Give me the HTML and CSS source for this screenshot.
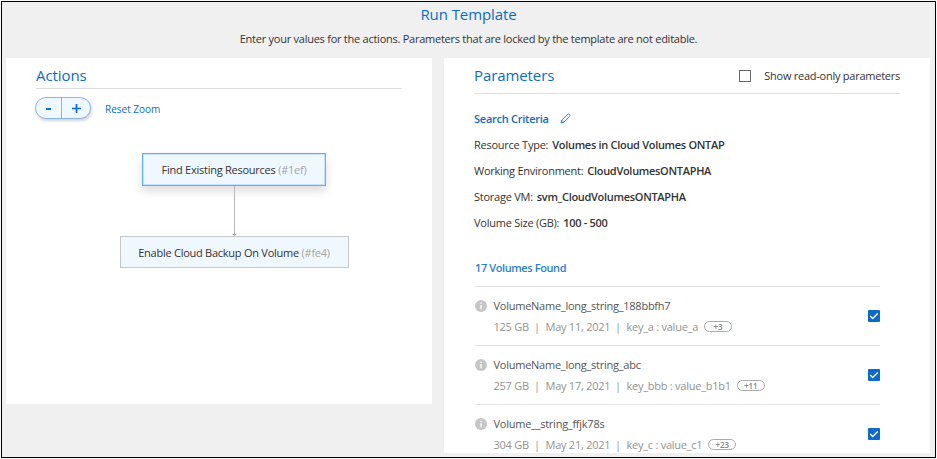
FILE: index.html
```html
<!DOCTYPE html>
<html lang="en">
<head>
<meta charset="utf-8">
<title>Run Template</title>
<link rel="stylesheet" href="styles.css">
</head>
<body>
<main class="frame">
  <header class="page-head">
    <h1>Run Template</h1>
    <p>Enter your values for the actions. Parameters that are locked by the template are not editable.</p>
  </header>
  <div class="panels">
    <section class="panel actions">
      <h2 class="panel-head">Actions</h2>
      <div class="zoom-bar">
        <div class="zoom">
          <button type="button" aria-label="Zoom out"><svg width="25" height="20" viewBox="0 0 25 20"><path d="M10 11h5" stroke="#0b6bcb" stroke-width="2"/></svg></button>
          <button type="button" aria-label="Zoom in"><svg width="28" height="20" viewBox="0 0 28 20"><path d="M10 10.500h9M14.500 6v9" stroke="#0b6bcb" stroke-width="1.700"/></svg></button>
        </div>
        <a class="reset">Reset Zoom</a>
      </div>
      <div class="flow">
        <div class="node selected"><span>Find Existing Resources <i>(#1ef)</i></span></div>
        <svg class="link" width="7" height="50" viewBox="0 0 7 50"><path d="M3.500 0v49" stroke="#b8b8bc"/><path d="M1 48h5l-2.500 2z" fill="#a6a6aa"/></svg>
        <div class="node"><span>Enable Cloud Backup On Volume <i>(#fe4)</i></span></div>
      </div>
    </section>
    <section class="panel params">
      <div class="panel-head">
        <h2>Parameters</h2>
        <label class="readonly"><span class="box"></span><span>Show read-only parameters</span></label>
      </div>
      <h3 class="criteria"><span>Search Criteria</span>
        <svg width="11" height="11" viewBox="0 0 11 11" fill="none" stroke="#1a75cf" stroke-width=".9" stroke-linejoin="round"><path d="M1 10l.7-2.800L7.600 1.300a1.200 1.200 0 0 1 1.700 0l.4.400a1.200 1.200 0 0 1 0 1.700L3.800 9.300zM1.700 7.200l2.100 2.100"/></svg>
      </h3>
      <dl class="fields">
        <div><dt>Resource Type:</dt><dd>Volumes in Cloud Volumes ONTAP</dd></div>
        <div><dt>Working Environment:</dt><dd>CloudVolumesONTAPHA</dd></div>
        <div><dt>Storage VM:</dt><dd>svm_CloudVolumesONTAPHA</dd></div>
        <div><dt>Volume Size (GB):</dt><dd>100 - 500</dd></div>
      </dl>
      <h3 class="found">17 Volumes Found</h3>
      <ul class="volumes">
        <li>
          <svg class="info" viewBox="0 0 12 12"><circle cx="6" cy="6" r="6" fill="#c6c6c6"/><path d="M6 5v4.200M6 2.700v1.400" stroke="#fff" stroke-width="1.300"/></svg>
          <div class="detail"><div class="name">VolumeName_long_string_188bbfh7</div>
          <div class="meta"><span class="size">125 GB</span><span class="bar">|</span><span class="date">May 11, 2021</span><span class="bar">|</span><span class="tag">key_a : value_a</span><span class="more">+3</span></div></div>
          <svg class="check" viewBox="0 0 12 12"><rect width="12" height="12" rx="1" fill="#0b6bcb"/><path d="M2.200 6l2.500 2.500 5-5" fill="none" stroke="#fff" stroke-width="1.300"/></svg>
        </li>
        <li>
          <svg class="info" viewBox="0 0 12 12"><circle cx="6" cy="6" r="6" fill="#c6c6c6"/><path d="M6 5v4.200M6 2.700v1.400" stroke="#fff" stroke-width="1.300"/></svg>
          <div class="detail"><div class="name">VolumeName_long_string_abc</div>
          <div class="meta"><span class="size">257 GB</span><span class="bar">|</span><span class="date">May 17, 2021</span><span class="bar">|</span><span class="tag">key_bbb : value_b1b1</span><span class="more">+11</span></div></div>
          <svg class="check" viewBox="0 0 12 12"><rect width="12" height="12" rx="1" fill="#0b6bcb"/><path d="M2.200 6l2.500 2.500 5-5" fill="none" stroke="#fff" stroke-width="1.300"/></svg>
        </li>
        <li>
          <svg class="info" viewBox="0 0 12 12"><circle cx="6" cy="6" r="6" fill="#c6c6c6"/><path d="M6 5v4.200M6 2.700v1.400" stroke="#fff" stroke-width="1.300"/></svg>
          <div class="detail"><div class="name">Volume__string_ffjk78s</div>
          <div class="meta"><span class="size">304 GB</span><span class="bar">|</span><span class="date">May 21, 2021</span><span class="bar">|</span><span class="tag">key_c : value_c1</span><span class="more">+23</span></div></div>
          <svg class="check" viewBox="0 0 12 12"><rect width="12" height="12" rx="1" fill="#0b6bcb"/><path d="M2.200 6l2.500 2.500 5-5" fill="none" stroke="#fff" stroke-width="1.300"/></svg>
        </li>
      </ul>
    </section>
  </div>
</main>
</body>
</html>
```

FILE: styles.css
```css
* { box-sizing: border-box; }
body { margin: 0; padding: 1px; background: #f8f8f8; font: 11px "Open Sans", sans-serif; letter-spacing: -.25px; color: #333; overflow: hidden; }
h1, h2, h3, p, ul, dl, dd { margin: 0; padding: 0; font-weight: 400; }
span, dt, dd { white-space: nowrap; }
.frame { width: 935px; height: 457px; border: 1px solid #000; background: #f0f0f0; overflow: hidden; }
.page-head { height: 56px; text-align: center; }
h1, h2 { font-size: 15px; letter-spacing: -.09px; color: #0b6bcb; }
h1 { line-height: 25px; }
.page-head p { line-height: 24px; }
.panels { display: flex; gap: 12px; align-items: flex-start; padding-left: 4px; }
.panel { background: #fff; }
.actions { width: 426px; height: 346px; padding: 0 30px; }
.params { width: 486px; height: 395px; padding: 0 30px; overflow: hidden; }
.panel-head { border-bottom: 1px solid #dedede; line-height: 35px; }
.actions .panel-head { height: 31px; }
.params .panel-head { height: 36px; display: flex; justify-content: space-between; }
.zoom-bar { display: flex; align-items: center; gap: 14px; height: 22px; margin: 8px 0 34px -1px; }
.zoom { display: flex; width: 56px; height: 22px; border: 1px solid #8db4e8; border-radius: 11px; background: #eff7ff; box-shadow: 1px 2px 3px rgba(0,0,0,.18); overflow: hidden; }
.zoom button { border: 0; padding: 0; background: none; display: flex; }
.zoom button + button { border-left: 1px solid #8db4e8; }
.reset { color: #0b6bcb; font-size: 10px; letter-spacing: 0; line-height: 20px; padding-top: 2px; }
.flow { display: flex; flex-direction: column; align-items: center; margin-left: 61px; width: 274px; }
.node { width: 229px; height: 32px; border: 1px solid #c5c8cc; background: #eff7ff; display: flex; align-items: center; justify-content: center; }
.node.selected { width: 184px; height: 33px; border: 1px solid #5eb1f5; box-shadow: inset 0 0 0 .5px #9bd0fb, 0 5px 9px rgba(0,0,0,.14); }
.node i { font-style: normal; color: #a5a5a5; }
.link { display: block; }
.readonly { display: flex; align-items: center; gap: 13px; height: 35px; }
.readonly .box { width: 12px; height: 12px; border: 1px solid #666; }
.criteria { display: flex; align-items: center; gap: 11px; height: 20px; margin-top: 14px; color: #0b6bcb; font-size: 11px; font-weight: 550; }
.fields { margin-top: 4px; }
.fields div { display: flex; height: 26px; line-height: 26px; gap: 4px; }
.fields dd { font-weight: 550; letter-spacing: -.3px; }
.found { color: #2a80d0; font-size: 11px; font-weight: 650; letter-spacing: -.4px; line-height: 20px; margin: 22px 0 8px 1px; }
.volumes { list-style: none; margin-left: 1px; width: 405px; }
.volumes li { display: flex; height: 59px; border-top: 1px solid #e4e4e4; padding-top: 9px; color: #555; }
.info { width: 12px; height: 12px; margin-top: 4px; }
.detail { margin-left: 6.500px; flex: 1; }
.name { line-height: 20px; font-size: 11px; }
.meta { display: flex; align-items: center; height: 20px; color: #939393; }
.size { width: 35px; }
.bar { width: 17px; text-align: center; }
.date { width: 64px; }
.more { font-size: 8px; letter-spacing: 0; font-weight: 600; line-height: 9px; height: 11px; border: 1px solid #aaa; border-radius: 6px; width: 28px; text-align: center; margin-left: 6px; color: #888; }
.check { width: 12px; height: 12px; margin-top: 14px; }
```
